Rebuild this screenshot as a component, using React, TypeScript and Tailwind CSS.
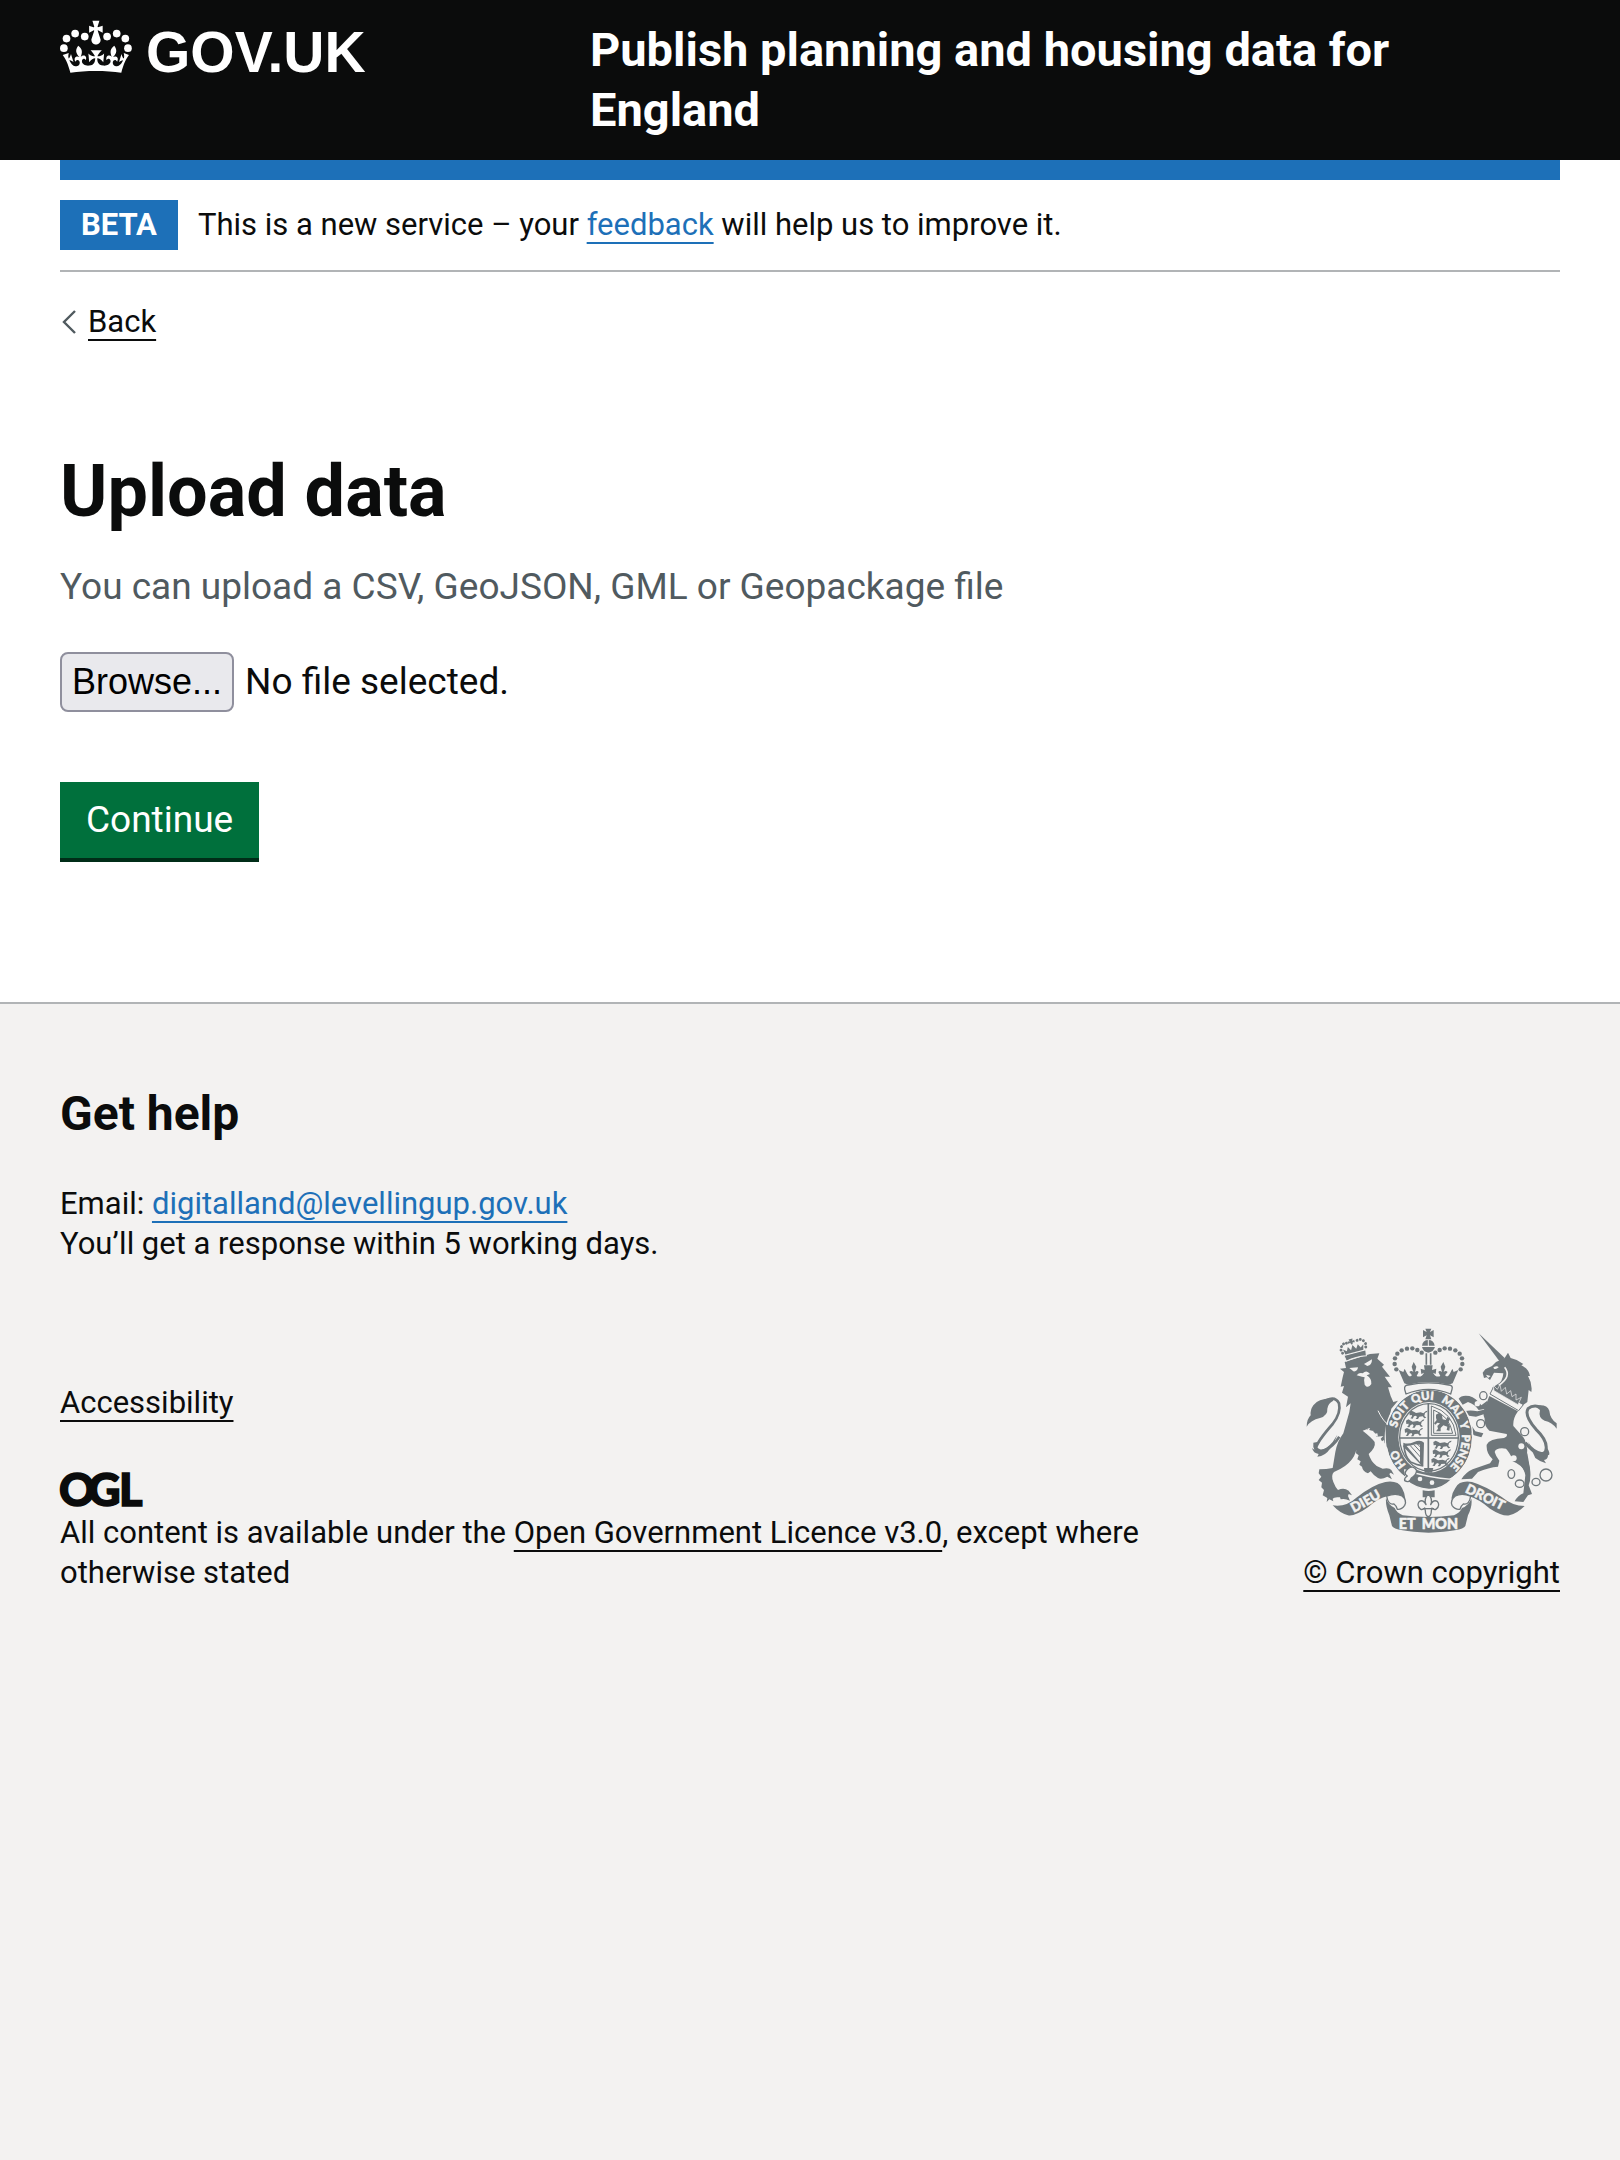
const INK = '#6f777b';
const PAPER = '#f3f2f1';

const HALF_DOTS: [number, number][] = [
  [71, 147],
  [79, 118],
  [105, 103],
  [134, 112],
];

function Crown() {
  return (
    <svg aria-hidden="true" viewBox="60 62 216 160" className="h-[53px] w-[72px] shrink-0 fill-white">
      {HALF_DOTS.map(([x, y]) => (
        <g key={x}>
          <circle cx={x} cy={y} r="11.6" />
          <circle cx={335.5 - x} cy={y} r="11.6" />
        </g>
      ))}
      <g transform="translate(68.5 64) scale(6.2 6.15)">
        <path d="M17 4.7l2.3 1.2V2.5l-2.3.7-.2-.2.9-3h-3.4l.9 3-.2.2c-.1.1-2.3-.7-2.3-.7v3.4L15 4.7c.1.1.1.2.2.2l-1.3 4c-.1.2-.1.4-.1.6 0 1.1.8 2 1.9 2.2h.7c1-.2 1.9-1.1 1.9-2.1 0-.2 0-.4-.1-.6l-1.3-4c-.1-.2 0-.2.1-.3" />
      </g>
      <g transform="translate(67.5 38) scale(6.25 6.1)">
        <path d="M16 29.2c4.4 0 8.6.3 12.3.8 1.1-4.5 2.4-7 3.7-8.8l-2.5-.9c.2 1.3.3 1.9 0 2.7-.4-.4-.8-1.1-1.1-2.3l-1.2 4c.7-.5 1.3-.8 2-.9-1.1 2.5-2.6 3.1-3.5 3-1.1-.2-1.7-1.2-1.5-2.1.3-1.2 1.5-1.5 2.1-.1 1.1-2.3-.8-3-2-2.3 1.9-1.9 2.1-3.5.6-5.6-2.1 1.6-2.1 3.2-1.2 5.5-1.2-1.4-3.2-.6-2.5 1.6.9-1.4 2.1-.5 1.9.8-.2 1.1-1.7 2.1-3.5 1.9-2.7-.2-2.9-2.1-2.9-3.6.7-.1 1.9.5 2.9 1.9l.4-4.3c-1.1 1.1-2.1 1.4-3.2 1.4.4-1.2 2.1-3 2.1-3h-5.4s1.7 1.9 2.1 3c-1.1 0-2.1-.2-3.2-1.4l.4 4.3c1-1.4 2.2-2 2.9-1.9-.1 1.5-.2 3.4-2.9 3.6-1.9.2-3.4-.8-3.5-1.9-.2-1.3 1-2.2 1.9-.8.7-2.3-1.2-3-2.5-1.6.9-2.2.9-3.9-1.2-5.5-1.5 2-1.3 3.7.6 5.6-1.2-.7-3.1 0-2 2.3.6-1.4 1.8-1.1 2.1.1.2.9-.3 1.9-1.5 2.1-.9.2-2.4-.5-3.5-3 .6 0 1.2.3 2 .9l-1.2-4c-.3 1.1-.7 1.9-1.1 2.3-.3-.8-.2-1.4 0-2.7l-2.9.9C1.3 23 2.6 25.5 3.7 30c3.7-.5 7.9-.8 12.3-.8" />
      </g>
    </svg>
  );
}

function OglMark() {
  return (
    <svg role="img" aria-label="Open Government Licence" viewBox="0 -12 82 46" className="h-[46px] w-[82px] overflow-visible fill-[#0b0c0c] font-['Lato',sans-serif] text-[45px] font-black">
      <g stroke="#0b0c0c" strokeWidth="1.5">
        <text x="-1" y="33">O</text>
        <text x="28" y="33">G</text>
        <text x="59" y="33">L</text>
      </g>
    </svg>
  );
}

const CROWN_DOTS: [number, number][] = [
  [341, 182],
  [336, 166],
  [337, 149],
  [344, 135],
  [357, 125],
  [373, 120],
  [389, 119],
  [404, 124],
  [417, 132],
];

function Passant({ x, y }: { x: number; y: number }) {
  return (
    <path
      transform={`translate(${x} ${y})`}
      d="M2 4l7-4 8 4 5 3 14-2 8 3 8-7 5-1-2 4-6 3-2 9 6 5-6 2-5-6-10 1-4 7-7 0 4-6-3-4-6 2-4 7-7-1 4-4 1-6-7 1z"
    />
  );
}

function RoyalArms() {
  return (
    <svg aria-hidden="true" viewBox="70 58 756 615" className="h-[205px] w-[252px]" fill={INK} strokeLinejoin="round">
      {/* lion: tail */}
      <path d="M132 274Q158 262 169 284Q176 312 150 346Q104 398 99 420Q104 436 128 424Q152 412 170 384" fill="none" stroke={INK} strokeWidth="8" />
      <path d="M150 270Q108 268 92 290Q82 304 84 320Q72 332 72 354Q84 334 112 328Q136 320 134 300Q136 284 152 276z" />
      <path d="M92 402Q90 416 96 424L88 418Q92 434 108 436L104 444Q128 442 142 420Q158 398 164 378L150 400Q130 424 112 422Q98 418 104 400z" />
      {/* lion: body */}
      <path d="M172 180L190 178L186 160L262 136L290 134L284 150L304 168L298 174L322 204L306 204L328 236L316 236L324 262L332 280L346 276L326 300L320 326L326 346L340 372L348 404L344 414L336 408L334 420L326 410L312 414L316 402L306 404L304 394L298 398L294 390L302 382L282 384L276 372L268 366L252 362L240 366Q268 388 276 400Q280 416 258 436Q264 458 282 472L300 480Q320 476 326 484L334 498L324 492L320 496L328 512L314 504Q296 514 286 508Q272 500 264 488L256 494Q240 488 238 474L230 468L234 458L224 452L228 440L220 434L222 404Q224 430 208 452Q190 476 154 490Q144 500 152 520Q158 536 166 544Q184 536 198 546L208 560L198 556L196 562L202 576Q186 568 174 572L172 566Q154 564 150 570L152 578L140 572L132 580L134 568L120 560L124 544L116 536L118 522L108 514L116 504L108 494L110 482Q132 482 150 478L158 430Q164 398 182 374Q190 346 200 310L204 284L190 296L196 264L178 252L184 232L174 234L180 206L184 190z" />
      <path d="M286 306Q302 340 322 352Q330 362 332 374" fill="none" stroke={PAPER} strokeWidth="3" />
      <g fill={PAPER}>
        <path d="M200 178L226 176Q224 190 212 188z" />
        <path d="M244 166L268 152Q268 170 254 172z" />
        <path d="M222 200Q230 190 240 194Q252 182 262 196L252 200Q268 210 266 226Q256 242 246 228Q242 214 246 206L238 204z" />
        <path d="M254 360L262 358L258 368L272 366L272 376L284 374L286 384L276 380L262 372z" />
      </g>
      {/* lion: crown */}
      <g transform="rotate(-15 216 130)">
        <path d="M182 132L250 132L247 150Q216 144 185 150z" stroke={PAPER} strokeWidth="3" />
        <path d="M187 130l-3-16 10 8 6-12 7 12 8-14 8 14 8-12 6 12 10-8-4 16z" />
        <path d="M212 106l-2-6-6 2v-8l6 2-2-7h12l-2 7 6-2v8l-6-2-2 6z" />
        {[[180, 124], [178, 114], [182, 104], [190, 98], [199, 98], [252, 124], [254, 114], [250, 104], [242, 98], [232, 98]].map(([x, y]) => (
          <circle key={`${x}-${y}`} cx={x} cy={y} r="4.4" />
        ))}
      </g>

      {/* unicorn: horn, head and neck */}
      <path d="M588 74L666 148L652 160z" />
      <path d="M640 160L666 148L676 132L684 148Q704 152 722 166L716 170Q738 180 742 202L736 202Q750 226 746 250L738 244L734 280L720 290L628 238L642 228Q660 222 662 194L634 192L622 214L612 206L604 208L600 192L608 182L628 172z" />
      <path d="M632 176q12-6 16 0q-8 8-14 4z" fill={PAPER} />
      <path d="M666 176Q688 204 648 230" fill="none" stroke={PAPER} strokeWidth="5" />
      <path d="M610 198l14 4-8 6z" fill={PAPER} />
      {/* unicorn: collar */}
      <path d="M632 236L722 288L708 306L622 256z" fill={PAPER} stroke={INK} strokeWidth="3" />
      <path d="M634 246l-2-16 12 12 8-14 4 20 12-12 4 20 12-10 4 18 12-8 0 18 16-8-10 22z" stroke={PAPER} strokeWidth="2" />
      {/* unicorn: body and legs */}
      <path d="M620 262L706 308Q690 330 692 352L722 386Q738 410 732 440L742 480Q746 510 738 530L748 556L736 560L722 580L696 578Q706 560 722 554L728 500Q724 476 706 462L690 452Q680 430 670 420Q640 416 636 430Q640 444 650 456L646 474Q618 476 586 490L568 510L536 512Q548 492 570 482L622 464L630 452Q610 434 612 408Q620 390 664 388Q676 384 672 376L620 366Q604 352 606 330Q600 318 604 304z" />
      <path d="M610 300L588 304Q578 288 556 280L540 288L528 270Q536 258 560 262Q580 268 596 290L614 276z" />
      <path d="M612 314L580 324Q556 322 544 316L552 340L566 350L578 368L602 374L596 386L574 380L554 360L536 338L532 312Q556 302 584 308L610 302z" />
      <path d="M690 440Q716 452 734 434L742 480L728 492Q720 470 690 458z" />
      {/* unicorn: tail */}
      <path d="M728 402Q768 450 788 430Q800 400 760 362Q724 320 736 300Q752 286 776 296" fill="none" stroke={INK} strokeWidth="9" />
      <path d="M756 292Q792 284 800 306Q802 330 822 344L822 360Q808 340 786 336Q766 328 772 304z" />
      <path d="M736 400Q752 424 776 430Q790 432 794 418Q806 440 796 440Q796 452 784 454L790 464Q770 458 758 448z" />
      {/* chain */}
      <g fill={PAPER} stroke={INK} strokeWidth="4">
        <ellipse cx="602" cy="261" rx="11" ry="12" />
        <circle cx="594" cy="345" r="12" />
        <circle cx="726" cy="369" r="12" />
        <ellipse cx="686" cy="496" rx="10" ry="13" />
        <ellipse cx="711" cy="525" rx="13" ry="11" />
        <ellipse cx="760" cy="520" rx="12" ry="11" />
        <circle cx="790" cy="499" r="18" />
      </g>
      <g fill={PAPER}>
        <circle cx="584" cy="285" r="8" />
        <circle cx="716" cy="413" r="9" />
        <circle cx="693" cy="449" r="9" />
      </g>

      {/* garter */}
      <path fillRule="evenodd" d="M439 244A129 142 0 0 1 439 528A129 142 0 0 1 439 244zM439 280A92 106 0 0 0 439 492A92 106 0 0 0 439 280z" />
      <ellipse cx="439" cy="386" rx="131" ry="144" fill="none" stroke={PAPER} strokeWidth="4" />
      <g fill={PAPER} stroke={PAPER} strokeWidth="1.5" className="font-['Lato',sans-serif] text-[34px] font-black">
        <defs>
          <path id="garterArc" d="M375 473A99 113 0 0 1 439 273A99 113 0 0 1 488 484" />
        </defs>
        <text><textPath href="#garterArc" startOffset="6">HO</textPath></text>
        <text><textPath href="#garterArc" startOffset="125">SOIT</textPath></text>
        <text><textPath href="#garterArc" startOffset="214">QUI</textPath></text>
        <text><textPath href="#garterArc" startOffset="300">MAL</textPath></text>
        <text><textPath href="#garterArc" startOffset="386">Y</textPath></text>
        <text><textPath href="#garterArc" startOffset="422">PENSE</textPath></text>
      </g>
      {/* lion paw over the garter */}
      <path d="M308 346Q332 356 340 380L348 404L344 414L336 408L334 420L326 410L312 414L310 396z" />

      {/* shield */}
      <ellipse cx="439" cy="386" rx="88" ry="101" fill={PAPER} stroke={INK} strokeWidth="4" />
      <path d="M437 284V492M350 388H528" fill="none" stroke={INK} strokeWidth="5" />
      <Passant x={378} y={306} />
      <Passant x={368} y={332} />
      <Passant x={364} y={358} />
      <g fill="none" stroke={INK} strokeWidth="3">
        <path d="M446 292V380H520Q512 312 446 292z" />
        <path d="M453 304V374H510Q500 322 453 304z" />
      </g>
      <path d="M460 318l10-6 8 8 2 12 10 2 4-10 8 8-6 10 6 10-2 14-8-2 2-10-12-4-8 8 0 10-14 0 6-8-2-8 8-8-8-2-6 6-4-4 8-10-2-6z" />
      <path d="M362 402Q376 408 394 400Q414 392 424 402L422 470L416 470L362 414zM372 412L412 460V408Q396 404 388 410z" fillRule="evenodd" />
      <path d="M364 410Q366 444 384 460L404 468L422 472" fill="none" stroke={INK} strokeWidth="5" />
      <path d="M382 410L414 446M392 406L414 430M402 404L414 416" fill="none" stroke={INK} strokeWidth="3" />
      <Passant x={450} y={396} />
      <Passant x={448} y={422} />
      <Passant x={444} y={448} />
      <path d="M424 478L452 478L448 492L426 492z" />

      {/* belt and buckle */}
      <path d="M366 484Q440 508 508 512Q476 544 438 542Q396 538 372 516z" stroke={PAPER} strokeWidth="4" />
      <g fill={PAPER}>
        <circle cx="412" cy="511" r="7" />
        <circle cx="448" cy="522" r="7" />
      </g>
      <path d="M376 480Q392 468 402 486Q400 500 386 508Q380 524 366 516Q364 508 374 502Q360 494 376 480z" fill={PAPER} stroke={INK} strokeWidth="4" />

      {/* crown */}
      <path d="M432 70l-4-10h18l-4 10 11-6v22l-11-6 4 12h-18l4-12-11 6V64z" />
      <path d="M418 111Q420 94 437 94Q454 94 456 111z" />
      <path d="M437 94V112" stroke={PAPER} strokeWidth="3" />
      <path d="M418 115H457Q452 130 437 132Q422 130 418 115z" />
      <path d="M431 134V168M444 134V168" stroke={INK} strokeWidth="5" fill="none" />
      {CROWN_DOTS.map(([x, y]) => (
        <g key={`${x}-${y}`}>
          <circle cx={x} cy={y} r="6.6" />
          <circle cx={875 - x} cy={y} r="6.6" />
        </g>
      ))}
      <path d="M348 184L362 190L366 180L374 196Q380 208 388 200L380 190Q386 184 392 190L387 174L393 160L401 174L397 190Q404 184 408 190L402 202Q416 208 424 192L416 196L414 180L426 184L424 170H450L448 184L461 180L459 196L451 192Q460 208 473 202L467 190Q471 184 478 190L474 174L482 160L488 174L483 190Q489 184 495 190L487 200Q495 208 501 196L509 180L513 190L527 184L510 224L498 228Q438 214 376 228L365 224z" />
      <path d="M376 229Q438 216 498 229Q512 230 508 242L504 256Q438 228 370 256L366 242Q364 230 376 229z" fill={PAPER} stroke={INK} strokeWidth="4" />

      {/* fleur-de-lis under the belt */}
      <path d="M420 545Q437 549 456 545V566H420z" />
      <path d="M437 556Q452 572 444 588Q452 572 464 578Q474 590 460 602Q452 604 448 598L446 606Q446 622 437 624Q428 622 428 606L426 598Q422 604 414 602Q400 590 410 578Q422 572 430 588Q422 572 437 556z" fill={PAPER} stroke={INK} strokeWidth="4" />
      <path d="M420 600H454" stroke={INK} strokeWidth="4" />

      {/* motto ribbon */}
      <path d="M150 590Q190 596 220 568Q270 528 308 520Q346 514 358 538Q366 552 368 570L350 566Q334 554 316 562Q286 568 256 596Q216 624 196 620Q172 614 150 590z" />
      <path d="M726 592Q690 592 656 564Q608 532 568 520Q530 514 518 538Q508 552 506 570L524 566Q540 554 558 562Q590 572 622 600Q660 624 680 620Q704 614 726 592z" />
      <path d="M312 562Q340 552 358 562Q374 574 366 590Q356 604 344 602Q340 590 334 586Q316 590 312 562z" fill={PAPER} stroke={INK} strokeWidth="4" />
      <path d="M564 562Q536 552 518 562Q502 574 508 590Q518 604 532 602Q536 590 542 586Q560 590 564 562z" fill={PAPER} stroke={INK} strokeWidth="4" />
      <path d="M310 568Q316 588 336 598Q342 612 360 620Q438 630 514 620Q532 612 538 598Q558 590 566 570Q570 592 556 620L548 652Q540 668 438 672Q336 668 328 652L320 620Q308 590 310 568z" />
      <g fill={PAPER} stroke={PAPER} strokeWidth="1.5" className="font-['Lato',sans-serif] font-black">
        <g className="text-[43px]">
          <text x="348" y="662">ET</text>
          <text x="417" y="662">MON</text>
        </g>
        <defs>
          <path id="dieuArc" d="M214 612Q256 590 326 548" />
          <path id="droitArc" d="M546 550Q600 576 684 618" />
        </defs>
        <g className="text-[40px]">
          <text><textPath href="#dieuArc">DIEU</textPath></text>
          <text><textPath href="#droitArc">DROIT</textPath></text>
        </g>
      </g>
    </svg>
  );
}

const LINK = 'underline decoration-2 underline-offset-[7px]';

export default function App() {
  return (
    <div className="flex min-h-screen flex-col bg-white font-['Roboto',sans-serif] text-[31px] leading-[40px] text-[#0b0c0c]">
      <header className="bg-[#0b0c0c] px-[60px] py-5 text-white">
        <div className="flex items-start">
          <div className="w-[530px] shrink-0">
            <a href="#home" aria-label="GOV.UK" className="flex w-fit items-start gap-[14px]">
              <Crown />
              <span className="font-['Liberation_Sans',sans-serif] text-[57px] leading-[64px] font-bold">GOV.UK</span>
            </a>
          </div>
          <a href="#service" className="max-w-[900px] flex-1 text-[47px] leading-[60px] font-bold">
            Publish planning and housing data for England
          </a>
        </div>
      </header>

      <div className="px-[60px]">
        <div className="h-5 bg-[#1d70b8]" />
        <div className="flex items-center gap-5 border-b-2 border-[#b1b4b6] py-5">
          <strong className="bg-[#1d70b8] px-[21px] leading-[50px] font-bold text-white">BETA</strong>
          <p>
            This is a new service – your{' '}
            <a href="#feedback" className={`${LINK} text-[#1d70b8]`}>feedback</a> will help us to improve it.
          </p>
        </div>
        <a href="#back" className="mt-[30px] flex w-fit items-center gap-3">
          <svg aria-hidden="true" viewBox="0 0 16 26" className="h-[26px] w-4" fill="none" stroke="#505a5f" strokeWidth="2.4">
            <path d="M15 2L4 13L15 24" />
          </svg>
          <span className={LINK}>Back</span>
        </a>
      </div>

      <main className="px-[60px] pt-[100px] pb-[140px]">
        <form className="flex flex-col items-start text-[37px] leading-[50px]" onSubmit={(e) => e.preventDefault()}>
          <h1 className="text-[72px] leading-[100px] font-bold">Upload data</h1>
          <p className="mt-5 text-[#505a5f]">You can upload a CSV, GeoJSON, GML or Geopackage file</p>
          <label htmlFor="datafile" className="mt-10 flex items-center gap-[11px]">
            <input id="datafile" type="file" className="sr-only" />
            <span className="rounded-lg border-2 border-[#8f8f9d] bg-[#e9e9ed] px-[10px] py-[3px] font-['Liberation_Sans',sans-serif] text-[36px] text-black">
              Browse...
            </span>
            <span>No file selected.</span>
          </label>
          <button type="submit" className="mt-[70px] border-b-4 border-[#002d18] bg-[#00703c] px-[26px] py-[13px] text-white">
            Continue
          </button>
        </form>
      </main>

      <footer className="flex-1 border-t-2 border-[#b1b4b6] bg-[#f3f2f1] px-[60px] pt-20">
        <h2 className="text-[48px] leading-[60px] font-bold">Get help</h2>
        <p className="mt-10">
          Email: <a href="mailto:digitalland@levellingup.gov.uk" className={`${LINK} text-[#1d70b8]`}>digitalland@levellingup.gov.uk</a>
          <br />
          You’ll get a response within 5 working days.
        </p>
        <div className="mt-16 flex items-end justify-between gap-[60px]">
          <div>
            <a href="#accessibility" className={LINK}>Accessibility</a>
            <div className="mt-[38px]">
              <OglMark />
            </div>
            <p className="mt-[6px]">
              All content is available under the{' '}
              <a href="#licence" className={LINK}>Open Government Licence v3.0</a>, except where otherwise stated
            </p>
          </div>
          <a href="#copyright" className={`${LINK} flex shrink-0 flex-col items-center gap-5`}>
            <RoyalArms />
            <span>© Crown copyright</span>
          </a>
        </div>
      </footer>
    </div>
  );
}
